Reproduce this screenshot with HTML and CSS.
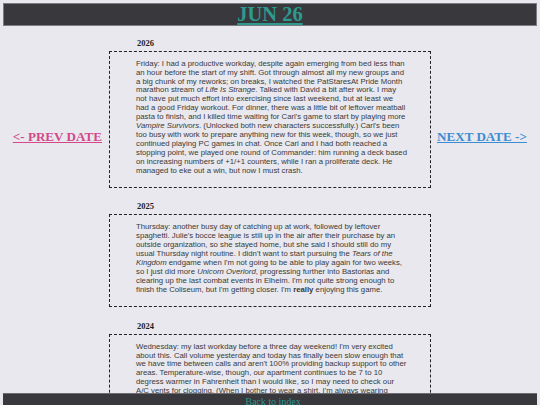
FILE: index.html
```html
<!DOCTYPE html>
<html lang="en">
<head>
<meta charset="utf-8">
<title>Jun 26</title>
<link rel="stylesheet" href="styles.css">
</head>
<body>
<header class="topbar">
  <a class="day-title" href="#">JUN 26</a>
</header>

<main class="layout">
  <nav class="side side-prev">
    <a class="prev-link" href="#">&lt;- PREV DATE</a>
  </nav>

  <section class="entries">
    <article class="entry">
      <h4 class="entry-year">2026</h4>
      <div class="entry-box">
        <p class="entry-text">Friday: I had a productive workday, despite again emerging from bed less than an hour before the start of my shift. Got through almost all my new groups and a big chunk of my reworks; on breaks, I watched the PatStaresAt Pride Month marathon stream of <i>Life Is Strange</i>. Talked with David a bit after work. I may not have put much effort into exercising since last weekend, but at least we had a good Friday workout. For dinner, there was a little bit of leftover meatball pasta to finish, and I killed time waiting for Carl's game to start by playing more <i>Vampire Survivors</i>. (Unlocked both new characters successfully.) Carl's been too busy with work to prepare anything new for this week, though, so we just continued playing PC games in chat. Once Carl and I had both reached a stopping point, we played one round of Commander: him running a deck based on increasing numbers of +1/+1 counters, while I ran a proliferate deck. He managed to eke out a win, but now I must crash.</p>
      </div>
    </article>

    <article class="entry">
      <h4 class="entry-year">2025</h4>
      <div class="entry-box">
        <p class="entry-text">Thursday: another busy day of catching up at work, followed by leftover spaghetti. Julie's bocce league is still up in the air after their purchase by an outside organization, so she stayed home, but she said I should still do my usual Thursday night routine. I didn't want to start pursuing the <i>Tears of the Kingdom</i> endgame when I'm not going to be able to play again for two weeks, so I just did more <i>Unicorn Overlord</i>, progressing further into Bastorias and clearing up the last combat events in Elheim. I'm not quite strong enough to finish the Coliseum, but I'm getting closer. I'm <b>really</b> enjoying this game.</p>
      </div>
    </article>

    <article class="entry">
      <h4 class="entry-year">2024</h4>
      <div class="entry-box">
        <p class="entry-text">Wednesday: my last workday before a three day weekend! I'm very excited about this. Call volume yesterday and today has finally been slow enough that we have time between calls and aren't 100% providing backup support to other areas. Temperature-wise, though, our apartment continues to be 7 to 10 degress warmer in Fahrenheit than I would like, so I may need to check our A/C vents for clogging. (When I bother to wear a shirt, I'm always wearing something light, and it still doesn't help much.)</p>
      </div>
    </article>
  </section>

  <nav class="side side-next">
    <a class="next-link" href="#">NEXT DATE -&gt;</a>
  </nav>
</main>

<footer class="bottombar">
  <a class="index-link" href="#">Back to index</a>
</footer>
</body>
</html>
```

FILE: styles.css
```css
html, body {
  margin: 0;
  padding: 0;
}

body {
  background: #e8e8ee;
  font-family: "Liberation Serif", "Times New Roman", serif;
  color: #1e1e1e;
}

/* date banner */
.topbar {
  margin: 3px 3px 0;
  height: 21px;
  background: #39383d;
  border: 1px solid #7c7b82;
  text-align: center;
  line-height: 21px;
}

.day-title {
  font-size: 20.5px;
  font-weight: bold;
  color: #2c9a8d;
  text-decoration: underline;
}

/* three columns: prev link, entries, next link */
.layout {
  display: grid;
  grid-template-columns: 1fr 322px 1fr;
  padding: 11.7px 0 40px;
}

.side {
  align-self: start;
  margin-top: 91px;
  font-size: 13.1px;
  font-weight: bold;
  line-height: 15px;
}

.side-prev {
  justify-self: end;
  margin-right: 7px;
}

.side-next {
  justify-self: start;
  margin-left: 6px;
}

.prev-link {
  color: #d2488b;
}

.next-link {
  color: #3a8dd2;
}

.entries {
  display: flex;
  flex-direction: column;
  gap: 13.3px;
}

.entry-year {
  margin: 0 0 3px;
  padding-left: 28px;
  font-size: 8.5px;
  line-height: 10px;
  font-weight: bold;
  color: #1e1e1e;
}

.entry-box {
  border: 1px dashed #222;
  padding: 8px 22px 11.5px 26px;
}

.entry-text {
  margin: 0;
  width: 35.1em;
  font-family: "Liberation Sans", Arial, sans-serif;
  font-size: 7.75px;
  line-height: 8.92px;
  color: #3a3a3a;
}

/* pinned footer strip */
.bottombar {
  position: fixed;
  left: 3px;
  right: 3px;
  bottom: 0;
  height: 11.5px;
  background: #39383d;
  border-top: 1px solid #6d6c72;
  text-align: center;
  line-height: 11.5px;
  padding-left: 6px;
}

.index-link {
  font-size: 10px;
  color: #2c9a8d;
  text-decoration: underline;
}
```
